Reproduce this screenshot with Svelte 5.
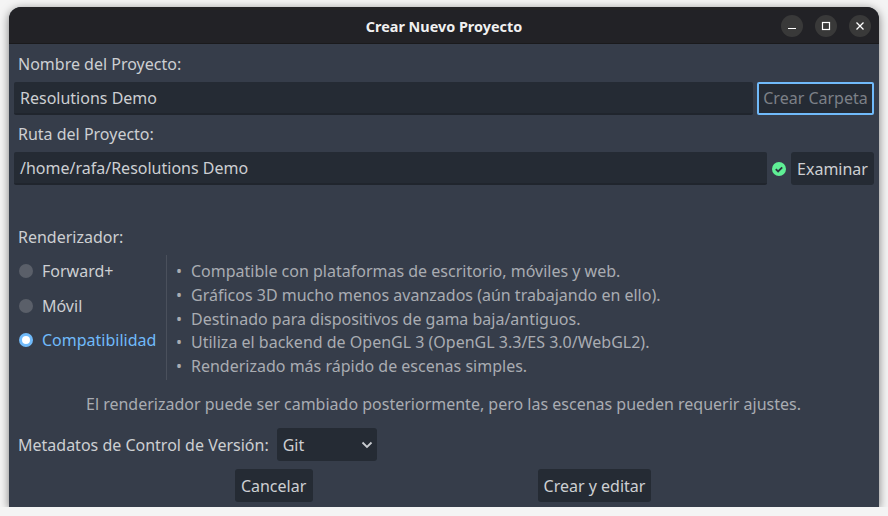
<script>
	const renderers = [
		{ name: 'Forward+', active: false },
		{ name: 'Móvil', active: false },
		{ name: 'Compatibilidad', active: true }
	];
	const features = [
		'Compatible con plataformas de escritorio, móviles y web.',
		'Gráficos 3D mucho menos avanzados (aún trabajando en ello).',
		'Destinado para dispositivos de gama baja/antiguos.',
		'Utiliza el backend de OpenGL 3 (OpenGL 3.3/ES 3.0/WebGL2).',
		'Renderizado más rápido de escenas simples.'
	];
</script>

<div class="window">
	<header class="titlebar">
		<span class="title">Crear Nuevo Proyecto</span>
		<div class="controls">
			<button class="ctl" aria-label="Minimizar">
				<svg width="22" height="22" viewBox="0 0 22 22"><path d="M7 13.500h8" stroke="#fff" stroke-width="1.2" /></svg>
			</button>
			<button class="ctl" aria-label="Maximizar">
				<svg width="22" height="22" viewBox="0 0 22 22"><rect x="7.500" y="7.500" width="7" height="7" fill="none" stroke="#fff" stroke-width="1.2" /></svg>
			</button>
			<button class="ctl" aria-label="Cerrar">
				<svg width="22" height="22" viewBox="0 0 22 22"><path d="M7.500 7.500l7 7M14.500 7.500l-7 7" stroke="#fff" stroke-width="1.3" /></svg>
			</button>
		</div>
	</header>

	<main class="content">
		<div class="label first">Nombre del Proyecto:</div>
		<div class="row">
			<div class="input grow">Resolutions Demo</div>
			<div class="create-folder">Crear Carpeta</div>
		</div>

		<div class="label">Ruta del Proyecto:</div>
		<div class="row">
			<div class="input grow">/home/rafa/Resolutions Demo</div>
			<svg class="check" width="14" height="14" viewBox="0 0 14 14">
				<circle cx="7" cy="7" r="7" fill="#5fef95" />
				<path d="M3.800 7.200l2.300 2.300 4.100-4.100" fill="none" stroke="#2b3440" stroke-width="1.800" />
			</svg>
			<div class="btn browse">Examinar</div>
		</div>

		<div class="label renderer-label">Renderizador:</div>
		<div class="renderer">
			<div class="radios">
				{#each renderers as r}
					<div class="radio" class:active={r.active}>
						<span class="dot"></span>
						<span>{r.name}</span>
					</div>
				{/each}
			</div>
			<ul class="features">
				{#each features as f}
					<li>{f}</li>
				{/each}
			</ul>
		</div>

		<p class="note">El renderizador puede ser cambiado posteriormente, pero las escenas pueden requerir ajustes.</p>

		<div class="vcs">
			<span>Metadatos de Control de Versión:</span>
			<div class="select">
				<span>Git</span>
				<svg width="12" height="8" viewBox="0 0 12 8"><path d="M1.500 1.500L6 6l4.500-4.500" fill="none" stroke="#c9ccd1" stroke-width="1.800" /></svg>
			</div>
		</div>

		<div class="actions">
			<div class="btn cancel">Cancelar</div>
			<div class="btn">Crear y editar</div>
		</div>
	</main>
</div>

<style>
	:global(body) {
		margin: 0;
		background: #f4f4f4;
		overflow: hidden;
	}

	.window {
		width: 870px;
		height: 500px;
		margin: 7px 9px 0;
		border-radius: 12px 12px 0 0;
		overflow: hidden;
		background: #363d4a;
		box-shadow: 0 2px 10px rgba(0, 0, 0, 0.5);
		font-family: 'Noto Sans', sans-serif;
		font-size: 16px;
		color: #cdcfd2;
		display: flex;
		flex-direction: column;
	}

	.titlebar {
		height: 37px;
		flex: none;
		background: #222226;
		border-bottom: 1px solid #1a1a1c;
		box-sizing: border-box;
		display: flex;
		align-items: center;
		justify-content: center;
		position: relative;
	}

	.title {
		color: #f0f0f0;
		font-size: 14.4px;
		font-weight: 700;
		padding-top: 2px;
	}

	.controls {
		position: absolute;
		right: 8px;
		top: 8px;
		display: flex;
		gap: 12px;
	}

	.ctl {
		width: 22px;
		height: 22px;
		padding: 0;
		border: 0;
		border-radius: 50%;
		background: #393939;
	}

	.ctl svg {
		display: block;
	}

	.content {
		padding: 0 5px;
		flex: 1;
	}

	.label {
		height: 37px;
		line-height: 38px;
		padding-left: 4px;
	}

	.first {
		height: 38px;
		line-height: 40px;
	}

	.row {
		display: flex;
		align-items: center;
		height: 33px;
	}

	.input {
		height: 33px;
		line-height: 32px;
		box-sizing: border-box;
		padding-left: 6px;
		background: #252b34;
		border-bottom: 2px solid #20252d;
		border-radius: 2px;
	}

	.grow {
		flex: 1;
	}

	.create-folder {
		margin-left: 4px;
		width: 117px;
		height: 33px;
		line-height: 28px;
		box-sizing: border-box;
		border: 2px solid #70bafa;
		border-radius: 2px;
		background: #252b34;
		color: #7c8087;
		text-align: center;
		white-space: nowrap;
	}

	.check {
		margin: 0 5px;
	}

	.btn {
		height: 33px;
		line-height: 35px;
		padding: 0 6px;
		background: #252b34;
		border-radius: 3px;
		white-space: nowrap;
	}

	.browse {
		width: 83px;
		box-sizing: border-box;
		text-align: center;
	}

	.cancel {
		width: 78px;
		box-sizing: border-box;
		text-align: center;
	}

	.renderer-label {
		margin-top: 33px;
		height: 37px;
	}

	.renderer {
		display: flex;
		height: 125px;
		margin-bottom: -1px;
	}

	.radios {
		width: 153px;
		box-sizing: border-box;
		padding: 0 0 0 5px;
		border-right: 1px solid #4a505c;
		display: flex;
		flex-direction: column;
	}

	.radio {
		height: 34.500px;
		box-sizing: border-box;
		padding-bottom: 2px;
		line-height: 30px;
		display: flex;
		align-items: center;
		gap: 9px;
		white-space: nowrap;
	}

	.dot {
		width: 14px;
		height: 14px;
		border-radius: 50%;
		background: #5a5f69;
		box-sizing: border-box;
		flex: none;
	}

	.active {
		color: #70bafa;
	}

	.active .dot {
		background: #fff;
		border: 3px solid #70bafa;
	}

	.features {
		margin: 0;
		padding: 5px 0 0 9px;
		list-style: none;
		color: #a9acb2;
	}

	.features li {
		height: 23.800px;
		line-height: 23.800px;
		white-space: nowrap;
	}

	.features li::before {
		content: '•';
		display: inline-block;
		width: 15px;
		font-size: 16px;
	}

	.note {
		margin: 0;
		padding-right: 1px;
		height: 50px;
		line-height: 50px;
		text-align: center;
		color: #a9acb2;
	}

	.vcs {
		display: flex;
		align-items: center;
		gap: 8px;
		padding-left: 4px;
		height: 33px;
		margin-top: -1px;
	}

	.select {
		width: 100px;
		height: 33px;
		box-sizing: border-box;
		padding: 0 4px 0 6px;
		background: #252b34;
		border-radius: 3px;
		display: flex;
		align-items: center;
		justify-content: space-between;
	}

	.actions {
		display: flex;
		justify-content: center;
		gap: 225px;
		margin-top: 8px;
		padding-right: 2px;
	}
</style>
